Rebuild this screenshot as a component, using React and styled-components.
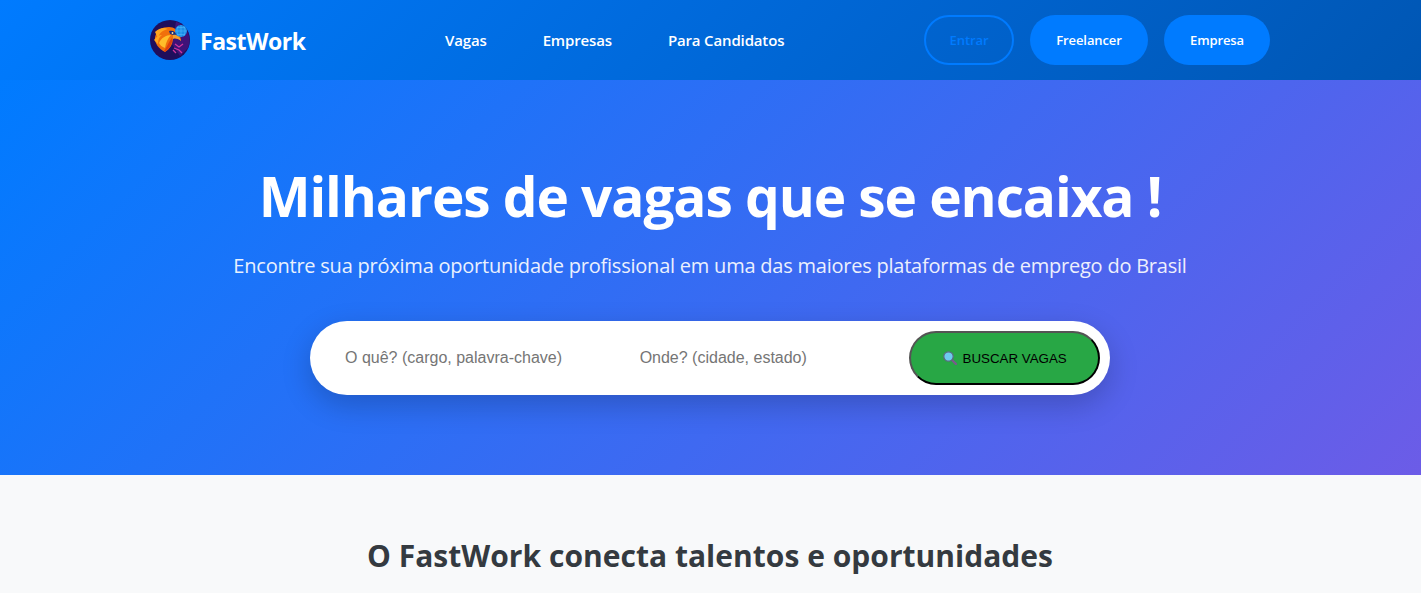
import React from 'react'
import styled, { createGlobalStyle } from 'styled-components'

const GlobalStyle = createGlobalStyle`
  html, body {
    margin: 0;
    padding: 0;
    background: #f8f9fa;
    overflow: hidden;
  }
  * { box-sizing: border-box; }
  body { font-family: "Open Sans", "Noto Sans", sans-serif; color: #333; }
`

const Header = styled.header`
  height: 80px;
  background: linear-gradient(135deg, #007bff, #0056b3);
  padding: 0 151px 0 150px;
  display: flex;
  align-items: center;
`

const Brand = styled.a`
  display: flex;
  align-items: center;
  gap: 10px;
  width: 295px;
  color: #fff;
  font-size: 23px;
  font-weight: 700;
  letter-spacing: -0.45px;
`

const BrandName = styled.span`
  padding-top: 2px;
`

const Nav = styled.nav`
  display: flex;
  gap: 56px;
  flex: 1;
`

const NavLink = styled.a`
  color: #fff;
  font-size: 15px;
  font-weight: 600;
  letter-spacing: -0.15px;
`

const Actions = styled.div`
  display: flex;
  gap: 16px;
`

const Pill = styled.a`
  display: flex;
  align-items: center;
  justify-content: center;
  height: 50px;
  width: ${(p) => p.$width}px;
  border-radius: 25px;
  font-size: 13px;
  font-weight: 600;
  letter-spacing: -0.1px;
  color: ${(p) => (p.$outline ? '#007bff' : '#fff')};
  background: ${(p) => (p.$outline ? 'transparent' : '#007bff')};
  border: ${(p) => (p.$outline ? '2px solid #007bff' : 'none')};
`

const Hero = styled.section`
  height: 395px;
  background: linear-gradient(135deg, #007bff, #6c5ce7);
  display: flex;
  flex-direction: column;
  align-items: center;
  padding: 80px 1px 0 0;
  color: #fff;
`

const Title = styled.h1`
  margin: 0;
  font-size: 55px;
  line-height: 72px;
  font-weight: 700;
  letter-spacing: -1.09px;
`

const Subtitle = styled.p`
  margin: 21px 0 0;
  font-size: 20px;
  line-height: 26px;
  letter-spacing: -0.225px;
  opacity: 0.9;
`

const SearchBar = styled.form`
  margin-top: 42px;
  width: 800px;
  height: 74px;
  padding: 10px;
  background: #fff;
  border-radius: 37px;
  box-shadow: 0 10px 30px rgba(0, 0, 0, 0.2);
  display: flex;
  align-items: center;
`

const SearchField = styled.input`
  border: none;
  outline: none;
  background: transparent;
  padding: 0 25px;
  width: ${(p) => p.$width}px;
  font-family: "Liberation Sans", Arial, sans-serif;
  font-size: 16px;
  color: #333;
  &::placeholder { color: #757575; opacity: 1; }
`

const SearchButton = styled.button`
  margin-left: auto;
  width: 191px;
  height: 54px;
  border-radius: 27px;
  border: 2px outset #000;
  background: #28a745;
  color: #000;
  font-family: "Liberation Sans", Arial, sans-serif;
  font-size: 13.33px;
  display: flex;
  align-items: center;
  justify-content: center;
  gap: 6px;
`

const Section = styled.section`
  background: #f8f9fa;
  height: 118px;
  padding: 60px 1px 0 0;
  text-align: center;
`

const SectionTitle = styled.h2`
  margin: 0;
  font-size: 30px;
  line-height: 42px;
  font-weight: 700;
  letter-spacing: 0.02px;
  color: #343a40;
`

const LogoMark = () => (
  <svg width="40" height="40" viewBox="0 0 40 40">
    <circle cx="20" cy="20" r="20" fill="#1f0e5c" />
    <path d="M26 1.5A20 20 0 0 1 38 28L30 36 22 24z" fill="#3f1278" />
    <path d="M25 24l4 3 4-3M24 28l5 2 3 3M26 33l-3-3" stroke="#d0359f" strokeWidth="1.3" fill="none" />
    <path d="M5 17C7 10 12 7 19 7c5 0 9 3 11 8l1 6c-3-3-6-3-8-3 0 6-3 11-8 14-6-3-11-9-10-15z" fill="#f0700c" />
    <path d="M5 12c4-4 9-5 13-3-5 1-9 4-10 9zM4 20c2-3 5-5 8-5-3 2-4 5-4 9z" fill="#ffa51e" />
    <path d="M9 23c2-5 7-8 12-8-3 3-5 7-6 13-3-1-5-3-6-5z" fill="#ffbe2a" />
    <path d="M14 31c3-4 4-8 8-13 1 5-2 10-7 14z" fill="#e0400e" />
    <path d="M19 11c4-1 7 1 9 5-3-1-6-1-8-2z" fill="#1b2a7a" />
    <path d="M23 15c4-1 7 2 8 6-2-2-5-3-8-2z" fill="#f0a030" />
    <circle cx="22.5" cy="13" r=".9" fill="#ffe9a0" />
    <circle cx="31" cy="11" r="6" fill="#1a8ee8" />
    <path d="M25.3 11h11.4M31 5v12M27 7.5h8M27 14.5h8M28.5 5.8c-2 3-2 7 0 10.4M33.5 5.8c2 3 2 7 0 10.4" stroke="#56bcff" strokeWidth=".5" fill="none" />
  </svg>
)

const MagnifierIcon = () => (
  <svg width="14" height="14" viewBox="0 0 14 14">
    <path d="M9 9l3.8 3.8" stroke="#7a5a8c" strokeWidth="2.4" strokeLinecap="round" />
    <circle cx="5.5" cy="5.5" r="4.7" fill="#6ccbf0" stroke="#5a6a80" strokeWidth="1.2" />
  </svg>
)

export default function App() {
  return (
    <>
      <GlobalStyle />
      <Header>
        <Brand>
          <LogoMark />
          <BrandName>FastWork</BrandName>
        </Brand>
        <Nav>
          <NavLink>Vagas</NavLink>
          <NavLink>Empresas</NavLink>
          <NavLink>Para Candidatos</NavLink>
        </Nav>
        <Actions>
          <Pill $outline $width={90}>Entrar</Pill>
          <Pill $width={118}>Freelancer</Pill>
          <Pill $width={106}>Empresa</Pill>
        </Actions>
      </Header>
      <Hero>
        <Title>Milhares de vagas que se encaixa !</Title>
        <Subtitle>Encontre sua próxima oportunidade profissional em uma das maiores plataformas de emprego do Brasil</Subtitle>
        <SearchBar>
          <SearchField $width={295} placeholder="O quê? (cargo, palavra-chave)" />
          <SearchField $width={295} placeholder="Onde? (cidade, estado)" />
          <SearchButton type="button">
            <MagnifierIcon />
            BUSCAR VAGAS
          </SearchButton>
        </SearchBar>
      </Hero>
      <Section>
        <SectionTitle>O FastWork conecta talentos e oportunidades</SectionTitle>
      </Section>
    </>
  )
}
